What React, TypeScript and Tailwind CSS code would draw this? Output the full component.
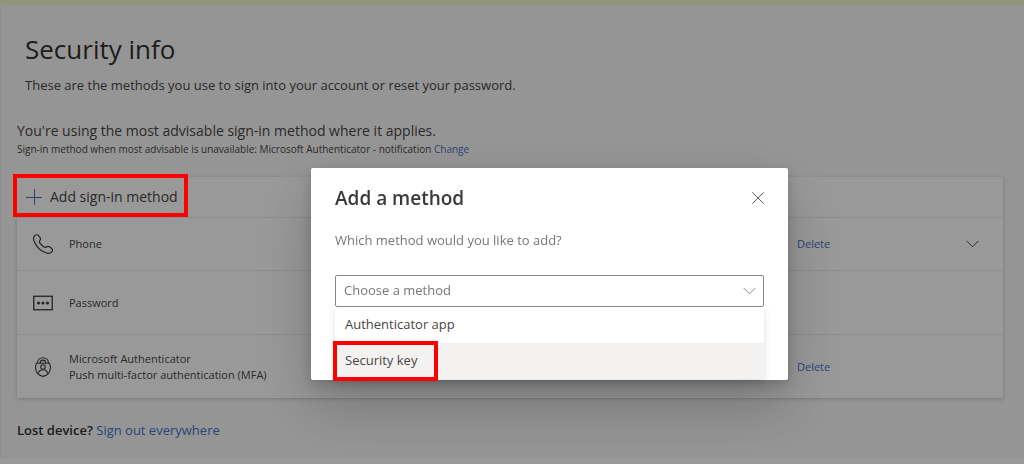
import { useState } from 'react';

interface SignInMethod {
  id: string;
  name: string;
  detail?: string;
  icon: React.ReactNode;
  canDelete: boolean;
  expandable: boolean;
  rowClass: string;
}

function PlusIcon() {
  return (
    <svg className="w-4 h-4 shrink-0" viewBox="0 0 16 16" fill="none" stroke="#4a72c4" aria-hidden="true">
      <path d="M8.5 0v16M0 8.5h16" />
    </svg>
  );
}

function PhoneIcon() {
  return (
    <svg className="w-5 h-5" viewBox="0 0 20 20" fill="none" stroke="#403f3e" strokeWidth="1.2" strokeLinejoin="round" aria-hidden="true">
      <path d="M1.6 1.7C2.6.6 4.500.4 5.500 1.500L7 3.600c.8 1.200.6 2.200-.2 3.100-.7.8-.6 1.400 0 2.200 1.100 1.600 2.600 3 4.300 4.200.8.500 1.500.5 2.200-.1.9-.8 1.900-1 3-.3l2.200 1.500c1.300 1 1.300 2.500.3 3.600-1.500 1.600-3.700 1.900-6 1C7.300 16.600 2.700 11.600 1 6.700.400 4.800.5 3 1.600 1.700z" />
    </svg>
  );
}

function PasswordIcon() {
  return (
    <svg className="w-5 h-4" viewBox="0 0 20 16" aria-hidden="true">
      <rect x="0.75" y="1.25" width="18.500" height="13.500" fill="none" stroke="#403f3e" strokeWidth="1.300" />
      <circle cx="5.500" cy="8" r="1.600" fill="#403f3e" />
      <circle cx="10" cy="8" r="1.600" fill="#403f3e" />
      <circle cx="14.500" cy="8" r="1.600" fill="#403f3e" />
    </svg>
  );
}

function AuthenticatorIcon() {
  return (
    <svg className="w-4 h-5" viewBox="0 0 16 20" fill="none" stroke="#403f3e" strokeWidth="1.1" aria-hidden="true">
      <path d="M2.500 6.200C2.500 2.900 4.900.7 8 .7s5.500 2.200 5.500 5.500" />
      <path d="M5.100 6.200C5.100 4.300 6.300 3.100 8 3.100s2.900 1.200 2.900 3.100" />
      <path d="M1.500 6.300h13c.6 1.300.9 2.700.9 4.200 0 4.500-3 7.900-7.400 8.900-4.400-1-7.400-4.400-7.400-8.900 0-1.500.3-2.900.9-4.200z" />
      <circle cx="8" cy="10" r="2.200" />
      <path d="M3.300 16.700c.4-2.500 2.300-4 4.700-4s4.300 1.500 4.700 4" />
    </svg>
  );
}

function ChevronIcon({ className }: { className: string }) {
  return (
    <svg className={className} viewBox="0 0 13 8" fill="none" stroke="currentColor" aria-hidden="true">
      <path d="M.6.9l5.900 5.900L12.400.9" />
    </svg>
  );
}

function CloseIcon() {
  return (
    <svg className="w-3 h-3" viewBox="0 0 12 12" fill="none" stroke="currentColor" aria-hidden="true">
      <path d="M.3.3l11.400 11.400M11.700.3L.3 11.700" />
    </svg>
  );
}

const methods: SignInMethod[] = [
  {
    id: 'phone',
    name: 'Phone',
    icon: <PhoneIcon />,
    canDelete: true,
    expandable: true,
    rowClass: 'h-[53px]',
  },
  {
    id: 'password',
    name: 'Password',
    icon: <PasswordIcon />,
    canDelete: false,
    expandable: false,
    rowClass: 'h-16',
  },
  {
    id: 'authenticator',
    name: 'Microsoft Authenticator',
    detail: 'Push multi-factor authentication (MFA)',
    icon: <AuthenticatorIcon />,
    canDelete: true,
    expandable: false,
    rowClass: 'h-16',
  },
];

const options = ['Authenticator app', 'Security key'];

function MethodRow({ method }: { method: SignInMethod }) {
  return (
    <li className={`flex items-center border-t border-[#ebebeb] pl-4 pr-6 ${method.rowClass}`}>
      <span className="w-5 flex justify-center shrink-0">{method.icon}</span>
      <div className="flex-1 pl-4 text-[11px] leading-4">
        <p>{method.name}</p>
        {method.detail && <p>{method.detail}</p>}
      </div>
      <div className="w-[182px] flex items-center justify-between">
        {method.canDelete && (
          <a href="#delete" className="text-[11px] leading-4 text-[#4a72c4]">
            Delete
          </a>
        )}
        {method.expandable && (
          <button type="button" aria-label={`Expand ${method.name}`}>
            <ChevronIcon className="w-[13px] h-2" />
          </button>
        )}
      </div>
    </li>
  );
}

function AddMethodDialog() {
  const [selected, setSelected] = useState('');

  return (
    <div className="fixed inset-0 z-10 bg-black/40 flex items-start justify-center pt-[168px] pl-[75px]">
      <div
        role="dialog"
        aria-labelledby="dialog-title"
        className="w-full max-w-[477px] bg-white rounded-xs px-6 pt-4 pb-px shadow-[0_25px_58px_rgba(0,0,0,0.22),0_5px_14px_rgba(0,0,0,0.18)]"
      >
        <div className="flex items-center justify-between">
          <h2 id="dialog-title" className="text-[19px] leading-7 font-semibold text-[#3b3a39]">
            Add a method
          </h2>
          <button type="button" aria-label="Close" className="text-[#605e5c]">
            <CloseIcon />
          </button>
        </div>

        <label htmlFor="method" className="block mt-4 text-[13px] leading-6 text-[#797775]">
          Which method would you like to add?
        </label>

        <div className="relative mt-[23px]">
          <select
            id="method"
            value={selected}
            onChange={(e) => setSelected(e.target.value)}
            className="block w-full h-8 appearance-none bg-white border border-[#8a8886] rounded-xs px-2 text-[13px] text-[#797775]"
          >
            <option value="">Choose a method</option>
            {options.map((option) => (
              <option key={option}>{option}</option>
            ))}
          </select>
          <ChevronIcon className="absolute right-2 top-3 w-[13px] h-2 text-[#8a8886] pointer-events-none" />
        </div>

        {/* Open option list */}
        <ul className="shadow-[0_3px_7px_rgba(0,0,0,0.13)] text-[13px] text-[#484644]">
          {options.map((option) => (
            <li key={option} className="relative">
              <button
                type="button"
                onClick={() => setSelected(option)}
                className={`block w-full h-9 px-[10px] text-left ${
                  option === 'Security key' ? 'bg-[#f3f2f1]' : 'bg-white'
                }`}
              >
                {option}
              </button>
              {option === 'Security key' && (
                <span className="absolute -left-0.5 -top-0.5 w-[105px] h-10 border-4 border-[#ff0000] pointer-events-none" />
              )}
            </li>
          ))}
        </ul>
      </div>
    </div>
  );
}

export default function App() {
  return (
    <div className="min-h-screen flex flex-col bg-white text-[#484746] font-['Open_Sans','Noto_Sans',sans-serif]">
      <div className="h-[5px] bg-[#f2f8cd]" />

      <main className="bg-[#f8f8f8] border-l border-[#eeeeee] pl-4 pr-[21px] pt-6 pb-[17px]">
        <div className="pl-2">
          <h1 className="text-[26px] leading-10 text-[#323130]">Security info</h1>
          <p className="mt-1 text-[13px] leading-6">
            These are the methods you use to sign into your account or reset your password.
          </p>
        </div>

        <p className="mt-6 text-sm leading-5">
          You're using the most advisable sign-in method where it applies.
        </p>
        <p className="text-[10px] leading-4">
          Sign-in method when most advisable is unavailable: Microsoft Authenticator - notification{' '}
          <a href="#change" className="text-[#4a72c4]">
            Change
          </a>
        </p>

        {/* Sign-in methods card */}
        <section className="mt-5 bg-white shadow-[0_1px_4px_rgba(0,0,0,0.2)]">
          <div className="relative flex items-center h-10 pl-[9px]">
            <button type="button" className="flex items-center gap-2 text-sm leading-5">
              <PlusIcon />
              Add sign-in method
            </button>
            <span className="absolute z-20 -left-1 -top-[3px] w-[175px] h-[43px] border-4 border-[#ff0000] pointer-events-none" />
          </div>
          <ul>
            {methods.map((method) => (
              <MethodRow key={method.id} method={method} />
            ))}
          </ul>
        </section>

        <p className="mt-5 text-[13px] leading-6">
          <span className="font-semibold text-[#323130]">Lost device?</span>{' '}
          <a href="#sign-out" className="text-[#4a72c4]">
            Sign out everywhere
          </a>
        </p>
      </main>

      <AddMethodDialog />
    </div>
  );
}
